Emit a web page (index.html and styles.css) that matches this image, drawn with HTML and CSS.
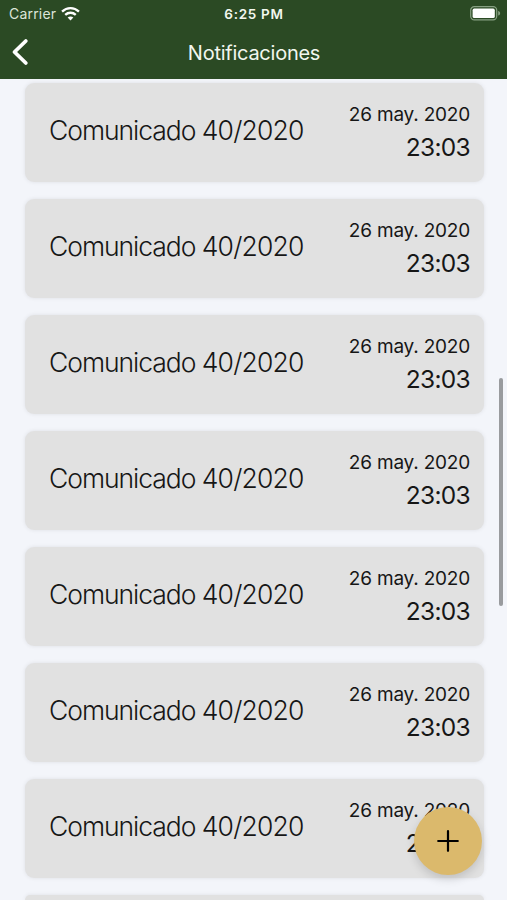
FILE: index.html
```html
<!DOCTYPE html>
<html lang="es">
<head>
    <meta charset="UTF-8">
    <meta name="viewport" content="width=device-width, initial-scale=1.0">
    <title>Notificaciones</title>
    <link rel="stylesheet" href="styles.css">
</head>
<body>
    <header class="app-header">
        <div class="status-bar">
            <div class="carrier">
                <span class="carrier-name">Carrier</span>
                <svg class="wifi" width="19" height="15" viewBox="0 0 18 14" fill="none" stroke="#fff" stroke-width="2.2">
                    <path d="M1 5.2C5.6 .8 12.4 .8 17 5.2"/>
                    <path d="M4 8.3C6.9 5.6 11.1 5.6 14 8.3"/>
                    <path d="M9 13.6L6.3 10.8C7.8 9.4 10.2 9.4 11.7 10.8Z" fill="#fff" stroke="none"/>
                </svg>
            </div>
            <span class="clock">6:25 PM</span>
            <svg class="battery" width="31" height="15" viewBox="0 0 31 15">
                <rect x=".7" y=".7" width="26" height="13.2" rx="3.6" fill="none" stroke="#87a082" stroke-width="1.2"/>
                <rect x="2.6" y="2.6" width="22.2" height="9.4" rx="1.6" fill="#fff"/>
                <path d="M28.2 5C30.8 5.6 30.8 9 28.2 9.6Z" fill="#87a082"/>
            </svg>
        </div>
        <nav class="nav-bar">
            <svg class="back" width="18" height="28" viewBox="0 0 18 28" fill="none" stroke="#fff" stroke-width="3.8" stroke-linecap="round" stroke-linejoin="round">
                <path d="M14.8 3L3.5 14L14.8 25"/>
            </svg>
            <h1>Notificaciones</h1>
        </nav>
    </header>

    <main class="list">
        <div class="card">
            <h2><span>Comunicado</span> <span class="number">40/2020</span></h2>
            <div class="card-date"><span class="date">26 may. 2020</span><span class="time">23:03</span></div>
        </div>
        <div class="card">
            <h2><span>Comunicado</span> <span class="number">40/2020</span></h2>
            <div class="card-date"><span class="date">26 may. 2020</span><span class="time">23:03</span></div>
        </div>
        <div class="card">
            <h2><span>Comunicado</span> <span class="number">40/2020</span></h2>
            <div class="card-date"><span class="date">26 may. 2020</span><span class="time">23:03</span></div>
        </div>
        <div class="card">
            <h2><span>Comunicado</span> <span class="number">40/2020</span></h2>
            <div class="card-date"><span class="date">26 may. 2020</span><span class="time">23:03</span></div>
        </div>
        <div class="card">
            <h2><span>Comunicado</span> <span class="number">40/2020</span></h2>
            <div class="card-date"><span class="date">26 may. 2020</span><span class="time">23:03</span></div>
        </div>
        <div class="card">
            <h2><span>Comunicado</span> <span class="number">40/2020</span></h2>
            <div class="card-date"><span class="date">26 may. 2020</span><span class="time">23:03</span></div>
        </div>
        <div class="card">
            <h2><span>Comunicado</span> <span class="number">40/2020</span></h2>
            <div class="card-date"><span class="date">26 may. 2020</span><span class="time">23:03</span></div>
        </div>
        <div class="card card-peek"></div>
    </main>

    <div class="scroll-thumb"></div>
    <button class="fab" aria-label="Agregar">
        <svg width="22" height="22" viewBox="0 0 22 22" stroke="#000" stroke-width="2.2" stroke-linecap="round">
            <path d="M11 1.2V20.8M1.2 11H20.8"/>
        </svg>
    </button>
</body>
</html>
```
FILE: styles.css
```css
:root {
    --header-bg: #2b4a24;
    --page-bg: #f3f5fa;
    --card-bg: #e1e1e1;
    --accent: #dbb96c;
    --text-color: #161616;
}

* {
    box-sizing: border-box;
    margin: 0;
    padding: 0;
}

body {
    position: relative;
    height: 900px;
    overflow: hidden;
    display: flex;
    flex-direction: column;
    font-family: Inter, "Liberation Sans", sans-serif;
    background-color: var(--page-bg);
    color: var(--text-color);
}

.app-header {
    flex: none;
    height: 79px;
    background-color: var(--header-bg);
    color: #f2f7ef;
}

.status-bar {
    display: grid;
    grid-template-columns: 1fr auto 1fr;
    align-items: center;
    height: 27px;
    padding: 0 6px 0 9px;
}

.carrier {
    display: flex;
    align-items: center;
    gap: 5px;
}

.carrier-name {
    font-size: 14px;
    letter-spacing: 0.2px;
    color: #dce5d9;
}

.wifi {
    margin-top: -1px;
}

.clock {
    margin-left: -2px;
    font-size: 13.5px;
    font-weight: 600;
    letter-spacing: 0.7px;
}

.battery {
    justify-self: end;
}

.nav-bar {
    display: grid;
    grid-template-columns: 40px 1fr 40px;
    align-items: center;
    height: 50px;
    padding: 0 10px 0 11px;
}

.nav-bar h1 {
    padding-top: 1px;
    font-size: 20px;
    font-weight: 400;
    letter-spacing: -0.25px;
    text-align: center;
}

.list {
    flex: 1;
    min-height: 0;
    display: flex;
    flex-direction: column;
    gap: 17px;
    padding: 4px 23px 0 25px;
    overflow: hidden;
}

.card {
    flex: none;
    display: flex;
    justify-content: space-between;
    align-items: flex-start;
    height: 99px;
    padding: 0 14px 0 25px;
    border-radius: 9px;
    background-color: var(--card-bg);
    box-shadow: 0 0 4px rgba(0, 0, 0, 0.09);
}

/* top edge of the next card in the scroll */
.card-peek {
    height: 5px;
    border-radius: 9px 9px 0 0;
}

.card h2 {
    margin-top: 31px;
    margin-left: -1px;
    font-size: 26.5px;
    line-height: 33px;
    font-weight: 300;
    letter-spacing: -1.05px;
    white-space: nowrap;
}

.card h2 .number {
    letter-spacing: -0.8px;
}

.card-date {
    display: flex;
    flex-direction: column;
    align-items: flex-end;
    padding-top: 19px;
    white-space: nowrap;
}

.date {
    font-size: 19px;
    line-height: 26px;
    letter-spacing: -0.2px;
}

.time {
    margin-top: 3px;
    font-size: 24.5px;
    line-height: 32px;
    letter-spacing: -0.7px;
}

.scroll-thumb {
    position: absolute;
    top: 378px;
    right: 4px;
    width: 4px;
    height: 228px;
    border-radius: 2px;
    background-color: #999b9e;
}

.fab {
    position: absolute;
    left: 414px;
    top: 807px;
    display: flex;
    align-items: center;
    justify-content: center;
    width: 68px;
    height: 68px;
    border: none;
    border-radius: 50%;
    background-color: var(--accent);
    box-shadow: 0 4px 10px rgba(0, 0, 0, 0.15);
}
```
